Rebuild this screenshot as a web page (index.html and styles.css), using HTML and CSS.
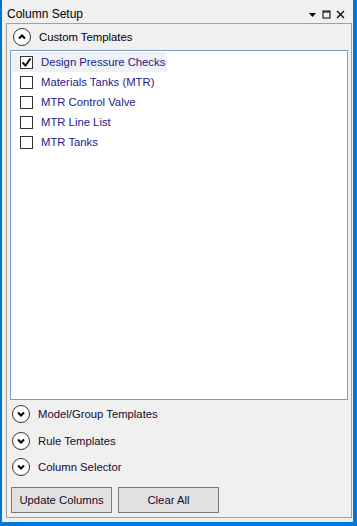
FILE: index.html
```html
<!DOCTYPE html>
<html lang="en">
<head>
  <meta charset="UTF-8">
  <title>Column Setup</title>
  <link rel="stylesheet" href="styles.css">
</head>
<body>
  <div class="window">
    <div class="titlebar">
      <span class="title">Column Setup</span>
      <span class="controls">
        <svg width="9" height="9" viewBox="0 0 9 9"><path d="M1 3h7L4.5 7z" fill="#000"/></svg>
        <svg width="9" height="9" viewBox="0 0 9 9"><rect x="1" y="1" width="7" height="7" fill="none" stroke="#000"/><path d="M1 2h7" stroke="#000"/></svg>
        <svg width="9" height="9" viewBox="0 0 9 9"><path d="M1 1l7 7M8 1l-7 7" stroke="#000" stroke-width="1.2"/></svg>
      </span>
    </div>

    <div class="panel">
      <div class="section open">
        <svg class="chev" width="20" height="20" viewBox="0 0 20 20"><circle cx="10" cy="10" r="8.5" fill="#fff" stroke="#333"/><path d="M7 11.5l3-3 3 3" fill="none" stroke="#000" stroke-width="2"/></svg>
        <span>Custom Templates</span>
      </div>

      <div class="listbox">
        <div class="item selected"><span class="check checked">
          <svg width="11" height="11" viewBox="0 0 11 11"><path d="M1.5 5.5l3 3 5-7" fill="none" stroke="#000" stroke-width="1.8"/></svg></span>Design Pressure Checks</div>
        <div class="item"><span class="check"></span>Materials Tanks (MTR)</div>
        <div class="item"><span class="check"></span>MTR Control Valve</div>
        <div class="item"><span class="check"></span>MTR Line List</div>
        <div class="item"><span class="check"></span>MTR Tanks</div>
      </div>

      <div class="section">
        <svg class="chev" width="20" height="20" viewBox="0 0 20 20"><circle cx="10" cy="10" r="8.5" fill="#fff" stroke="#333"/><path d="M7 8.5l3 3 3-3" fill="none" stroke="#000" stroke-width="2"/></svg>
        <span>Model/Group Templates</span>
      </div>
      <div class="section">
        <svg class="chev" width="20" height="20" viewBox="0 0 20 20"><circle cx="10" cy="10" r="8.5" fill="#fff" stroke="#333"/><path d="M7 8.5l3 3 3-3" fill="none" stroke="#000" stroke-width="2"/></svg>
        <span>Rule Templates</span>
      </div>
      <div class="section">
        <svg class="chev" width="20" height="20" viewBox="0 0 20 20"><circle cx="10" cy="10" r="8.5" fill="#fff" stroke="#333"/><path d="M7 8.5l3 3 3-3" fill="none" stroke="#000" stroke-width="2"/></svg>
        <span>Column Selector</span>
      </div>

      <div class="buttons">
        <button class="btn">Update Columns</button>
        <button class="btn">Clear All</button>
      </div>
    </div>
  </div>
</body>
</html>
```

FILE: styles.css
```css
html, body { margin: 0; padding: 0; }
body { font-family: "Liberation Sans", Arial, sans-serif; font-size: 11.3px; color: #000; background: #0078d7; }
.window { width: 351px; height: 522px; background: #f0f0f0; border-left: 2px solid #0078d7; border-right: 4px solid #0078d7; border-bottom: 4px solid #0078d7; display: flex; flex-direction: column; }
.titlebar { height: 23px; display: flex; align-items: center; justify-content: space-between; padding: 5px 8px 0 5px; box-sizing: border-box; }
.title { font-size: 12px; }
.controls { display: flex; gap: 5px; align-items: center; }
.panel { margin: 0 1px 4px 4px; flex: 1; border: 1px solid #a0a0a0; display: flex; flex-direction: column; padding: 0 3px 4px 3px; }
.section { display: flex; align-items: center; gap: 7px; height: 26.5px; padding-left: 1px; color: #1a0a2a; }
.section.open { height: 26px; color: #000; padding-left: 2px; }
.listbox { background: #fff; border: 1px solid #7f9db9; height: 350px; padding: 1px; box-sizing: border-box; color: #1d1a8c; margin-bottom: 1px; }
.item { display: flex; align-items: center; height: 20px; width: max-content; padding: 0 2px 0 8px; gap: 8px; }
.item.selected { background: #eef1f5; }
.check { width: 11px; height: 11px; border: 1px solid #333; background: #fff; display: flex; align-items: center; justify-content: center; }
.check.checked svg { display: block; }
.buttons { display: flex; gap: 6px; margin-top: auto; padding-left: 1px; }
.btn { width: 101px; height: 26px; font-family: "Liberation Sans", Arial, sans-serif; font-size: 11.3px; background: #e1e1e1; border: 1px solid #7a7a7a; color: #1a0a2a; padding: 0; }
```
